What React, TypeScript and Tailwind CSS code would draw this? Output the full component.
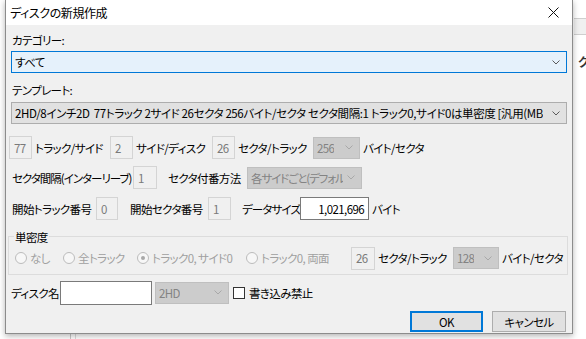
import React from 'react'

const font = "font-['Noto_Sans_CJK_JP','Noto_Sans',sans-serif] [font-feature-settings:'palt']"

function Chevron({ color = '#6d6d6d' }: { color?: string }) {
  return (
    <svg width="8" height="5" viewBox="0 0 8 5" className="shrink-0">
      <path d="M0.5 0.5 L4 4 L7.5 0.5" fill="none" stroke={color} strokeWidth="1" />
    </svg>
  )
}

function Combo({
  value,
  w,
  variant = 'disabled',
  textClass = '',
}: {
  value: string
  w: string
  variant?: 'disabled' | 'focus' | 'normal'
  textClass?: string
}) {
  const styles = {
    disabled: 'bg-[#cccccc] border-[#bfbfbf] text-[#838383]',
    focus: 'bg-[#e5f1fb] border-[#0078d7] text-black',
    normal: 'bg-[#e1e1e1] border-[#adadad] text-black',
  }[variant]
  return (
    <div
      className={`${w} h-[22px] ${styles} border flex items-center justify-between gap-[4px] pl-[3px] pr-[6px] overflow-hidden whitespace-nowrap shrink-0`}
    >
      <span className={`overflow-hidden min-w-0 ${textClass}`}>{value}</span>
      <Chevron color={variant === 'disabled' ? '#a8a8a8' : '#5a5a5a'} />
    </div>
  )
}

function Box({ value, w, white }: { value: string; w: string; white?: boolean }) {
  return (
    <div
      className={`${w} h-[23px] border shrink-0 flex items-center ${
        white
          ? 'bg-white border-[#7a7a7a] justify-end pr-[4px] text-black'
          : 'bg-[#f0f0f0] border-[#d4d4d4] pl-[4px] text-[#7a7a7a]'
      }`}
    >
      {value}
    </div>
  )
}

function Radio({ label, checked, w }: { label: string; checked?: boolean; w: string }) {
  return (
    <div className={`${w} flex items-center gap-[3px] shrink-0 text-[#a0a0a0] whitespace-nowrap`}>
      <span className="w-[12px] h-[12px] rounded-full border border-[#bcbcbc] bg-[#f7f7f7] flex items-center justify-center shrink-0">
        {checked && <span className="w-[4px] h-[4px] rounded-full bg-[#a8a8a8]" />}
      </span>
      {label}
    </div>
  )
}

export default function App() {
  return (
    <div className={`relative w-[586px] h-[339px] bg-white overflow-hidden text-[11.5px] tracking-[-0.6px] leading-[16px] text-black ${font}`}>
      {/* background window peeking out on the right and below */}
      <div className="absolute left-[574px] top-[18px] w-[12px] h-[17px] bg-[#f0f0f0] border-y border-[#cfcfcf]" />
      <div className="absolute left-[578px] top-[54px] text-[12px] font-bold text-[#333]">ク</div>
      <div className="absolute left-[70px] top-[332px] w-[1px] h-[7px] bg-[#c8c8c8]" />
      <div className="absolute left-[75px] top-[332px] w-[1px] h-[7px] bg-[#dcdcdc]" />

      <div className="relative ml-[5px] w-[568px] h-[334px] border-x border-b border-[#8c8c8c] bg-[#f0f0f0] shadow-[0_2px_6px_rgba(0,0,0,0.3)] flex flex-col">
        {/* Title bar */}
        <div className="h-[25px] bg-white flex items-center justify-between pl-[4px] shrink-0">
          <span className="text-[12px] tracking-[-0.4px]">ディスクの新規作成</span>
          <svg width="11" height="11" viewBox="0 0 11 11" className="mr-[13px]">
            <path d="M0.5 0.5 L10.5 10.5 M10.5 0.5 L0.5 10.5" stroke="#111" strokeWidth="1" />
          </svg>
        </div>

        {/* Category */}
        <div className="mt-[6px] h-[18px] flex items-center pl-[6px]">カテゴリー:</div>
        <div className="mt-[2px] pl-[5px]">
          <Combo value="すべて" w="w-[556px]" variant="focus" />
        </div>

        {/* Template */}
        <div className="mt-[8px] h-[18px] flex items-center pl-[6px]">テンプレート:</div>
        <div className="mt-[3px] pl-[5px]">
          <Combo
            value="2HD/8インチ2D  77トラック 2サイド 26セクタ 256バイト/セクタ セクタ間隔:1 トラック0,サイド0は単密度 [汎用(MB"
            w="w-[556px]"
            variant="normal"
            textClass="whitespace-pre tracking-[-0.4px]"
          />
        </div>

        {/* Row 1 */}
        <div className="mt-[12px] h-[23px] flex items-center pl-[3px] whitespace-nowrap">
          <Box value="77" w="w-[23px]" />
          <span className="w-[78px] pl-[3px] shrink-0">トラック/サイド</span>
          <Box value="2" w="w-[23px]" />
          <span className="w-[79px] pl-[3px] shrink-0">サイド/ディスク</span>
          <Box value="26" w="w-[23px]" />
          <span className="w-[78px] pl-[3px] shrink-0">セクタ/トラック</span>
          <Combo value="256" w="w-[47px]" />
          <span className="pl-[3px]">バイト/セクタ</span>
        </div>

        {/* Row 2 */}
        <div className="mt-[7px] h-[23px] flex items-center pl-[6px] whitespace-nowrap">
          <span className="w-[121px] shrink-0 tracking-[-1px]">セクタ間隔(インターリーブ)</span>
          <Box value="1" w="w-[24px]" />
          <span className="w-[90px] pl-[11px] shrink-0">セクタ付番方法</span>
          <Combo value="各サイドごと(デフォル" w="w-[115px]" textClass="tracking-[-1.1px]" />
        </div>

        {/* Row 3 */}
        <div className="mt-[8px] h-[23px] flex items-center pl-[6px] whitespace-nowrap">
          <span className="w-[84px] shrink-0">開始トラック番号</span>
          <Box value="0" w="w-[22px]" />
          <span className="w-[90px] pl-[12px] shrink-0">開始セクタ番号</span>
          <Box value="1" w="w-[23px]" />
          <span className="w-[69px] pl-[11px] shrink-0 tracking-[-0.9px]">データサイズ</span>
          <Box value="1,021,696" w="w-[69px]" white />
          <span className="pl-[3px]">バイト</span>
        </div>

        {/* Single density group */}
        <div className="relative mt-[16px] ml-[2px] w-[560px] h-[39px] border border-[#dcdcdc]">
          <span className="absolute left-[5px] top-[-8px] px-[1px] bg-[#f0f0f0]">単密度</span>
          <div className="mt-[9px] h-[24px] flex items-center pl-[6px]">
            <Radio label="なし" w="w-[48px]" />
            <Radio label="全トラック" w="w-[74px]" />
            <Radio label="トラック0, サイド0" w="w-[109px]" checked />
            <Radio label="トラック0, 両面" w="w-[105px]" />
            <Box value="26" w="w-[24px]" />
            <span className="w-[78px] pl-[3px] shrink-0 whitespace-nowrap">セクタ/トラック</span>
            <Combo value="128" w="w-[46px]" />
            <span className="pl-[3px] whitespace-nowrap">バイト/セクタ</span>
          </div>
        </div>

        {/* Disk name */}
        <div className="mt-[5px] h-[25px] flex items-center pl-[5px] whitespace-nowrap">
          <span className="w-[49px] shrink-0">ディスク名</span>
          <div className="w-[92px] h-[24px] bg-white border border-[#7a7a7a] shrink-0" />
          <div className="ml-[3px]">
            <Combo value="2HD" w="w-[74px]" />
          </div>
          <span className="ml-[4px] w-[12px] h-[12px] bg-white border border-[#333] shrink-0" />
          <span className="ml-[4px]">書き込み禁止</span>
        </div>

        {/* Buttons */}
        <div className="mt-[6px] flex justify-end gap-[9px] pr-[6px]">
          <button className="w-[73px] h-[21px] bg-[#e1e1e1] border-2 border-[#0078d7] flex items-center justify-center">
            OK
          </button>
          <button className="w-[74px] h-[21px] bg-[#e1e1e1] border border-[#adadad] flex items-center justify-center">
            キャンセル
          </button>
        </div>
      </div>
    </div>
  )
}
